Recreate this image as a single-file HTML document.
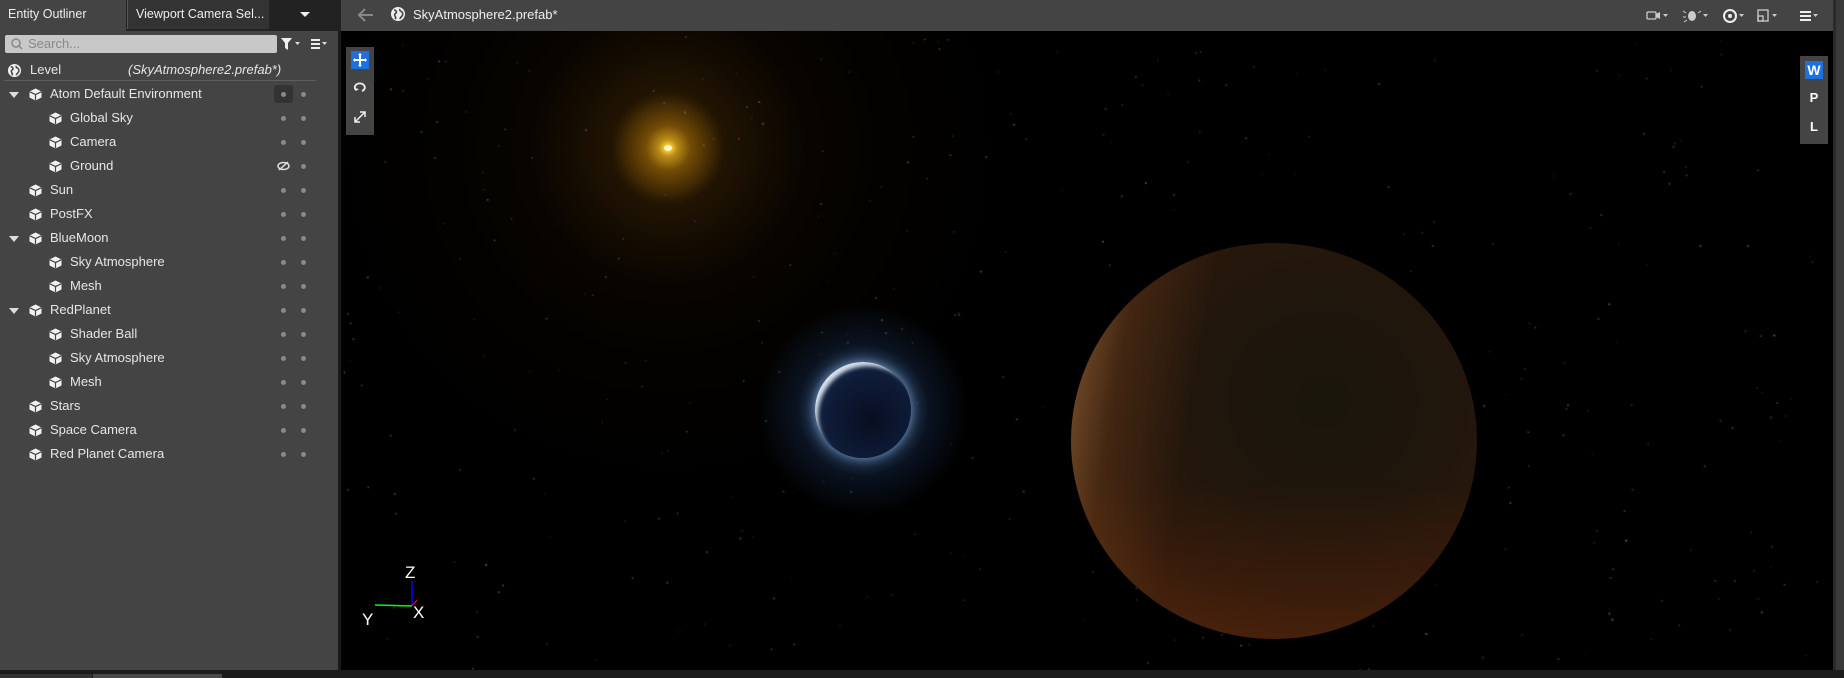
<!DOCTYPE html>
<html><head><meta charset="utf-8"><style>
*{margin:0;padding:0;box-sizing:border-box}
body{width:1844px;height:678px;background:#1a1a1a;overflow:hidden;font-family:"Liberation Sans","DejaVu Sans",sans-serif;color:#ddd;position:relative}
.abs{position:absolute}
#left{left:0;top:31px;width:338px;height:639px;background:#444}
#tabs{left:0;top:0;width:341px;height:31px;background:#222}
.tab{position:absolute;top:0;height:29px;font-size:12.5px;line-height:29px;padding-left:8px;color:#eee;white-space:nowrap}
#search{left:5px;top:35px;width:272px;height:18px;background:#c8c8c8;border-radius:2px;color:#888;font-size:13px;line-height:18px;padding-left:23px}
.row{position:absolute;left:0;height:24px;width:338px;font-size:13px;line-height:24px;color:#e6e6e6;white-space:nowrap}
.row .t{position:absolute}
.cube{position:absolute;top:6px;width:13px;height:13px}
.dot{position:absolute;top:10px;width:5px;height:5px;border-radius:50%;background:#8a8a8a}
.tri{position:absolute;top:10px;width:0;height:0;border-left:5px solid transparent;border-right:5px solid transparent;border-top:6px solid #ddd}
#vp{left:341px;top:31px;width:1492px;height:639px;background:#000;overflow:hidden}
#vhead{left:341px;top:0;width:1492px;height:31px;background:#444}
</style></head><body>
<div id="tabs" class="abs">
 <div class="tab" style="left:0;width:126px;background:#444;height:31px">Entity Outliner</div>
 <div class="tab" style="left:127px;width:142px;background:#333;border-left:1px solid #555">Viewport Camera Sel...</div>
 <div class="abs" style="left:300px;top:12px;border-left:5px solid transparent;border-right:5px solid transparent;border-top:5px solid #eee"></div>
</div>
<div id="left" class="abs"></div>
<div id="search" class="abs"><svg class="abs" style="left:6px;top:3px" width="12" height="12"><circle cx="5" cy="5" r="4" fill="none" stroke="#888" stroke-width="1.5"/><line x1="8" y1="8" x2="11" y2="11" stroke="#888" stroke-width="1.5"/></svg>Search...</div>
<svg class="abs" style="left:280px;top:36px" width="50" height="16"><path d="M1 2h11l-4 5v7l-3-2v-5z" fill="#eee"/><path d="M15 6h5l-2.5 3z" fill="#ddd"/><rect x="31" y="3" width="9" height="2" fill="#eee"/><rect x="31" y="7" width="9" height="2" fill="#eee"/><rect x="31" y="11" width="9" height="2" fill="#eee"/><path d="M42 6h5l-2.5 3z" fill="#ddd"/></svg>
<div class="abs" style="left:4px;top:80px;width:312px;height:1px;background:#5e5e5e"></div>
<div id="rows"></div>
<div class="abs" style="left:0;top:670px;width:1844px;height:8px;background:#1c1c1c"></div>
<div class="abs" style="left:0;top:674px;width:92px;height:4px;background:#333"></div>
<div class="abs" style="left:93px;top:674px;width:129px;height:4px;background:#4a4a4a"></div>
<div class="abs" style="left:1833px;top:0;width:11px;height:670px;background:#2a2a2a"></div>
<div class="abs" style="left:1836px;top:0;width:8px;height:670px;background:#3a3a3a"></div>

<div id="vhead" class="abs">
 <svg class="abs" style="left:16px;top:7px" width="18" height="16"><path d="M16 8H3M8 2L2 8l6 6" fill="none" stroke="#888" stroke-width="2"/></svg>
 <svg class="abs" style="left:49px;top:6px" width="16" height="16"><circle cx="8" cy="8" r="7" fill="#eee"/><path d="M4 4c2 0 3 2 2 3s-2 1-1 3 1 2 0 3M10 3c-1 2 1 2 2 3s1 3 0 4-2 2-2 3" fill="none" stroke="#444" stroke-width="1.6"/></svg>
 <div class="abs" style="left:72px;top:0;line-height:29px;font-size:13px;color:#eee">SkyAtmosphere2.prefab*</div>
 <svg class="abs" style="left:1305px;top:8px" width="180" height="16">
  <rect x="1" y="4" width="9" height="7" rx="1" fill="none" stroke="#ccc" stroke-width="1.3"/><path d="M10 6l4-2v7l-4-2z" fill="#ccc"/><path d="M17 6h5l-2.5 3z" fill="#ccc"/>
  <ellipse cx="46" cy="8" rx="4" ry="5" fill="#ccc"/><path d="M40 5l-3-2M40 9h-3M41 12l-3 2M52 5l3-2" stroke="#ccc"/><path d="M57 6h5l-2.5 3z" fill="#ccc"/>
  <ellipse cx="84" cy="8" rx="6" ry="6" fill="none" stroke="#eee" stroke-width="2"/><circle cx="84" cy="8" r="2" fill="#eee"/><path d="M93 6h5l-2.5 3z" fill="#ccc"/>
  <rect x="112" y="2" width="10" height="11" fill="none" stroke="#ccc" stroke-width="1.3"/><rect x="112" y="8" width="5" height="5" fill="none" stroke="#ccc" stroke-width="1.3"/><path d="M126 6h5l-2.5 3z" fill="#ccc"/>
  <rect x="154" y="3" width="11" height="2" fill="#eee"/><rect x="154" y="7" width="11" height="2" fill="#eee"/><rect x="154" y="11" width="11" height="2" fill="#eee"/><path d="M167 6h5l-2.5 3z" fill="#ccc"/>
 </svg>
</div>

<div id="vp" class="abs">
 <canvas id="c" width="1492" height="639" class="abs" style="left:0;top:0"></canvas>
 <div class="abs" style="left:-73px;top:-283px;width:800px;height:800px;border-radius:50%;background:radial-gradient(circle,rgba(255,200,40,.9) 0%,rgba(230,150,10,.5) 4%,rgba(150,90,10,.22) 10%,rgba(70,40,5,.12) 24%,rgba(30,18,3,.06) 45%,rgba(0,0,0,0) 70%)"></div>
 <div class="abs" style="left:323px;top:114px;width:8px;height:6px;border-radius:50%;background:#fff8c0;box-shadow:0 0 5px 2px #ffd040"></div>
 <div class="abs" style="left:412px;top:269px;width:220px;height:220px;border-radius:50%;background:radial-gradient(circle,rgba(140,190,245,.85) 0%,rgba(90,140,210,.55) 24%,rgba(40,75,130,.25) 42%,rgba(0,0,0,0) 68%)"></div>
 <div class="abs" style="left:474px;top:331px;width:96px;height:96px;border-radius:50%;background:radial-gradient(circle at 58% 60%,#080e20 0%,#0e1a36 50%,#17294a 85%,#2a4470 100%);box-shadow:5px 6px 4px -2px rgba(235,245,255,.9) inset, 0 0 10px rgba(150,190,240,.7)"></div>
 <div class="abs" style="left:710px;top:192px;width:446px;height:436px;border-radius:50%;background:radial-gradient(circle,rgba(0,0,0,0) 44%,rgba(190,80,45,.45) 46%,rgba(0,0,0,0) 54%)"></div>
 <div class="abs" style="left:730px;top:212px;width:406px;height:396px;border-radius:50%;background:radial-gradient(ellipse at 62% 40%,#1a160c 0%,#20160c 35%,#2a180c 60%,#3e220e 85%,#6a4020 100%);"></div>
 <div class="abs" style="left:730px;top:212px;width:406px;height:396px;border-radius:50%;background:linear-gradient(100deg,rgba(210,150,90,.5) 0%,rgba(140,80,35,.25) 15%,rgba(0,0,0,0) 32%),linear-gradient(180deg,rgba(0,0,0,0) 60%,rgba(100,40,10,.4) 100%)"></div>
 <div class="abs" style="left:5px;top:16px;width:28px;height:88px;background:#444"></div>
 <div class="abs" style="left:10px;top:20px;width:18px;height:18px;background:#1e70e0"></div>
 <svg class="abs" style="left:10px;top:20px" width="18" height="18"><path d="M9 3v12M3 9h12" stroke="#fff" stroke-width="2"/><path d="M9 2l-2 2h4zM9 16l-2-2h4zM2 9l2-2v4zM16 9l-2-2v4z" fill="#fff"/></svg>
 <svg class="abs" style="left:10px;top:48px" width="18" height="18"><path d="M5 11a5 4 0 1 1 6 1" fill="none" stroke="#eee" stroke-width="1.8"/><path d="M3 9l2 3 3-2z" fill="#eee"/></svg>
 <svg class="abs" style="left:10px;top:77px" width="18" height="18"><path d="M4 14L14 4M9 4h5v5M4 9v5h5" fill="none" stroke="#eee" stroke-width="1.5"/></svg>
 <div class="abs" style="left:1459px;top:25px;width:28px;height:88px;background:#444"></div>
 <div class="abs" style="left:1464px;top:30px;width:18px;height:18px;background:#1e70e0;color:#fff;font-weight:bold;font-size:14px;line-height:18px;text-align:center">W</div>
 <div class="abs" style="left:1464px;top:59px;width:18px;color:#fff;font-weight:bold;font-size:13px;text-align:center">P</div>
 <div class="abs" style="left:1464px;top:88px;width:18px;color:#fff;font-weight:bold;font-size:13px;text-align:center">L</div>
 <svg class="abs" style="left:4px;top:503px" width="90" height="100">
  <line x1="67" y1="47" x2="67" y2="72" stroke="#00f" stroke-width="1.5"/>
  <line x1="30" y1="71" x2="67" y2="72" stroke="#0f0" stroke-width="1.5"/>
  <line x1="67" y1="72" x2="72" y2="66" stroke="#f00" stroke-width="1.2"/>
  <text x="60" y="44" fill="#fff" font-size="17" font-family="Liberation Sans">Z</text>
  <text x="68" y="84" fill="#fff" font-size="17" font-family="Liberation Sans">X</text>
  <text x="17" y="91" fill="#fff" font-size="17" font-family="Liberation Sans">Y</text>
 </svg>
</div>
<script>
var rows=[["Level",0,0,1],["Atom Default Environment",1,1],["Global Sky",2],["Camera",2],["Ground",2,0,0,1],["Sun",1],["PostFX",1],["BlueMoon",1,1],["Sky Atmosphere",2],["Mesh",2],["RedPlanet",1,1],["Shader Ball",2],["Sky Atmosphere",2],["Mesh",2],["Stars",1],["Space Camera",1],["Red Planet Camera",1]];
var h="";
var cube='<svg class="cube" viewBox="0 0 13 13"><path d="M6.5 0.5L12.5 3.5V9.5L6.5 12.5L0.5 9.5V3.5Z" fill="#f2f2f2"/><path d="M0.8 3.8L6.5 6.6L12.2 3.8M6.5 6.6V12.3" fill="none" stroke="#444" stroke-width="1.2"/></svg>';
rows.forEach(function(r,i){
 var y=58+i*24;
 h+='<div class="row" style="top:'+y+'px">';
 if(r[3]){h+='<svg class="cube" style="left:7px;top:5px;width:15px;height:15px" viewBox="0 0 16 16"><circle cx="8" cy="8" r="7" fill="#eee"/><path d="M4 4c2 0 3 2 2 3s-2 1-1 3 1 2 0 3M10 3c-1 2 1 2 2 3s1 3 0 4-2 2-2 3" fill="none" stroke="#444" stroke-width="1.6"/></svg><span class="t" style="left:30px">Level</span><span class="t" style="left:128px;font-style:italic">(SkyAtmosphere2.prefab*)</span></div>';return;}
 var cx=r[1]==1?29:49;
 if(r[2])h+='<div class="tri" style="left:9px"></div>';
 if(r[1]==1&&i==1)h+='<div class="abs" style="left:274px;top:3px;width:19px;height:18px;border-radius:3px;background:#333"></div>';
 h+=cube.replace('class="cube"','class="cube" style="left:'+cx+'px"');
 h+='<span class="t" style="left:'+(cx+21)+'px">'+r[0]+'</span>';
 if(r[4])h+='<svg class="abs" style="left:277px;top:7px" width="13" height="10"><ellipse cx="6.5" cy="5" rx="5.5" ry="3.5" fill="none" stroke="#ddd" stroke-width="1.5"/><line x1="2" y1="9" x2="11" y2="1" stroke="#ddd" stroke-width="1.5"/></svg>';
 else h+='<div class="dot" style="left:281px"></div>';
 h+='<div class="dot" style="left:301px"></div></div>';
});
document.getElementById("rows").innerHTML=h;
var c=document.getElementById("c").getContext("2d");
var s=12345;function rnd(){s=(s*16807)%2147483647;return s/2147483647;}
for(var i=0;i<380;i++){var x=rnd()*1492,y=rnd()*639,a=0.1+rnd()*0.35,t=rnd();
c.fillStyle=t<0.3?"rgba(220,160,130,"+a+")":"rgba(170,190,230,"+a+")";c.fillRect(x,y,rnd()<0.2?2:1.5,rnd()<0.2?2:1.5);}
</script>
</body></html>
